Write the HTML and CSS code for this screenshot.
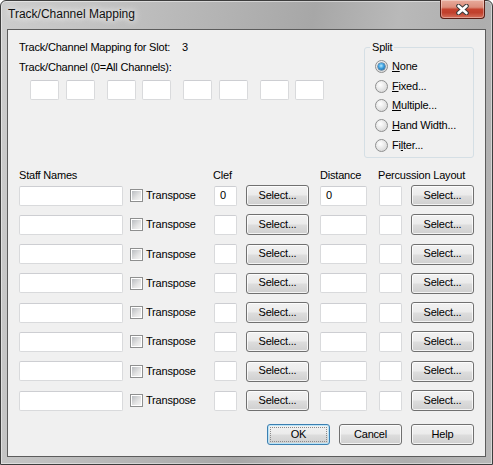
FILE: index.html
```html
<!DOCTYPE html>
<html>
<head>
<meta charset="utf-8">
<link rel="stylesheet" href="styles.css">
</head>
<body>
<div class="window">
  <div class="titlebar">
    <span class="title">Track/Channel Mapping</span>
    <div class="close">
      <svg width="13" height="11" viewBox="0 0 13 11">
        <path d="M2.5 2 L10.5 9 M10.5 2 L2.5 9" stroke="#3a3a3a" stroke-width="4.6" stroke-linecap="round"/>
        <path d="M2.5 2 L10.5 9 M10.5 2 L2.5 9" stroke="#ffffff" stroke-width="2.6" stroke-linecap="round"/>
      </svg>
    </div>
  </div>
  <div class="client">
    <div class="top">
      <div class="mapping">
        <div class="slot-line"><span class="slot-label">Track/Channel Mapping for Slot:</span><span>3</span></div>
        <div class="channel-label">Track/Channel (0=All Channels):</div>
        <div class="channels">
          <div class="pair"><div class="tb ch"></div><div class="tb ch"></div></div>
          <div class="pair"><div class="tb ch"></div><div class="tb ch"></div></div>
          <div class="pair"><div class="tb ch"></div><div class="tb ch"></div></div>
          <div class="pair"><div class="tb ch"></div><div class="tb ch"></div></div>
        </div>
      </div>
      <fieldset class="split">
        <legend>Split</legend>
        <div class="radios">
          <div class="radio-row"><span class="radio on"><span class="dot"></span></span><span><u>N</u>one</span></div>
          <div class="radio-row"><span class="radio"></span><span><u>F</u>ixed...</span></div>
          <div class="radio-row"><span class="radio"></span><span><u>M</u>ultiple...</span></div>
          <div class="radio-row"><span class="radio"></span><span><u>H</u>and Width...</span></div>
          <div class="radio-row"><span class="radio"></span><span>Fi<u>l</u>ter...</span></div>
        </div>
      </fieldset>
    </div>

    <div class="cols head">
      <div>Staff Names</div>
      <div></div>
      <div class="h-clef">Clef</div>
      <div></div>
      <div>Distance</div>
      <div class="h-perc">Percussion Layout</div>
    </div>

    <div class="cols rows">
      <div class="tb staff"></div>
      <div class="trans"><span class="cb"></span><span>Transpose</span></div>
      <div class="tb small">0</div>
      <div class="btn">Select...</div>
      <div class="tb dist">0</div>
      <div class="tb small"></div>
      <div class="btn">Select...</div>

      <div class="tb staff"></div>
      <div class="trans"><span class="cb"></span><span>Transpose</span></div>
      <div class="tb small"></div>
      <div class="btn">Select...</div>
      <div class="tb dist"></div>
      <div class="tb small"></div>
      <div class="btn">Select...</div>

      <div class="tb staff"></div>
      <div class="trans"><span class="cb"></span><span>Transpose</span></div>
      <div class="tb small"></div>
      <div class="btn">Select...</div>
      <div class="tb dist"></div>
      <div class="tb small"></div>
      <div class="btn">Select...</div>

      <div class="tb staff"></div>
      <div class="trans"><span class="cb"></span><span>Transpose</span></div>
      <div class="tb small"></div>
      <div class="btn">Select...</div>
      <div class="tb dist"></div>
      <div class="tb small"></div>
      <div class="btn">Select...</div>

      <div class="tb staff"></div>
      <div class="trans"><span class="cb"></span><span>Transpose</span></div>
      <div class="tb small"></div>
      <div class="btn">Select...</div>
      <div class="tb dist"></div>
      <div class="tb small"></div>
      <div class="btn">Select...</div>

      <div class="tb staff"></div>
      <div class="trans"><span class="cb"></span><span>Transpose</span></div>
      <div class="tb small"></div>
      <div class="btn">Select...</div>
      <div class="tb dist"></div>
      <div class="tb small"></div>
      <div class="btn">Select...</div>

      <div class="tb staff"></div>
      <div class="trans"><span class="cb"></span><span>Transpose</span></div>
      <div class="tb small"></div>
      <div class="btn">Select...</div>
      <div class="tb dist"></div>
      <div class="tb small"></div>
      <div class="btn">Select...</div>

      <div class="tb staff"></div>
      <div class="trans"><span class="cb"></span><span>Transpose</span></div>
      <div class="tb small"></div>
      <div class="btn">Select...</div>
      <div class="tb dist"></div>
      <div class="tb small"></div>
      <div class="btn">Select...</div>
    </div>

    <div class="actions">
      <div class="btn default">OK</div>
      <div class="btn">Cancel</div>
      <div class="btn">Help</div>
    </div>
  </div>
</div>
</body>
</html>
```

FILE: styles.css
```css
html, body {
  margin: 0;
  padding: 0;
  background: #ffffff;
}

.window {
  box-sizing: border-box;
  width: 493px;
  height: 465px;
  border: 1px solid #3d3d3d;
  border-radius: 6px 6px 0 0;
  background: linear-gradient(100deg, #cdcdcd 0%, #c1c1c1 20%, #b4b4b4 38%, #a7a7a7 55%, #b9b9b9 70%, #aeaeae 85%, #b8b8b8 100%);
  box-shadow: inset 0 0 0 1px rgba(255, 255, 255, 0.45);
  display: flex;
  flex-direction: column;
  font-family: "Liberation Sans", Arial, sans-serif;
  font-size: 11px;
  letter-spacing: -0.2px;
  color: #000;
}

.titlebar {
  height: 28px;
  flex: none;
  display: flex;
  justify-content: space-between;
  align-items: flex-start;
}

.title {
  font-size: 12px;
  letter-spacing: 0;
  line-height: 15px;
  padding-top: 6px;
  padding-left: 7px;
  color: #111;
  text-shadow: 0 0 6px #ffffff, 0 0 10px rgba(255, 255, 255, 0.8);
}

.close {
  box-sizing: border-box;
  width: 45px;
  height: 19px;
  margin-right: 7px;
  margin-top: -1px;
  border: 1px solid #5a1f16;
  border-top: none;
  border-radius: 0 0 4px 4px;
  background: linear-gradient(#e8ab9c 0%, #dc8e7c 40%, #c5432f 52%, #c0402c 70%, #d5705a 100%);
  box-shadow: inset 0 0 0 1px rgba(255, 255, 255, 0.35);
  display: flex;
  align-items: center;
  justify-content: center;
}

.client {
  box-sizing: border-box;
  height: 428px;
  margin: 0 6px 7px 6px;
  border: 1px solid #5c5c5c;
  background: #f0f0f0;
  padding: 0 11px;
  display: flex;
  flex-direction: column;
}

.top {
  display: flex;
  justify-content: space-between;
  align-items: flex-start;
}

.mapping {
  padding-top: 11px;
}

.slot-line,
.channel-label {
  line-height: 13px;
  white-space: nowrap;
}

.slot-label {
  display: inline-block;
  width: 163px;
}

.channel-label {
  margin-top: 7px;
}

.channels {
  display: flex;
  gap: 12px;
  margin-top: 6px;
  margin-left: 11px;
}

.pair {
  display: flex;
  gap: 6.5px;
}

.tb {
  box-sizing: border-box;
  height: 20px;
  background: #ffffff;
  border: 1px solid #d9dadc;
  border-top-color: #cdced2;
  border-radius: 2px;
  padding-left: 5px;
  display: flex;
  align-items: center;
  line-height: 13px;
}

.ch {
  width: 29px;
}

.split {
  box-sizing: border-box;
  width: 110px;
  height: 117px;
  margin: 11px 0 0 0;
  padding: 6px 0 0 5px;
  border: 1px solid #d5dfe5;
  border-radius: 3px;
}

.split legend {
  padding: 0 2px;
  line-height: 13px;
}

.radios {
  display: flex;
  flex-direction: column;
  gap: 6.7px;
  margin-left: 5px;
}

.radio-row {
  display: flex;
  align-items: center;
  gap: 4px;
  height: 13px;
  line-height: 13px;
  white-space: nowrap;
}

.radio {
  box-sizing: border-box;
  width: 13px;
  height: 13px;
  border-radius: 50%;
  border: 1px solid #8e8f8f;
  background: radial-gradient(circle at 40% 35%, #ffffff 0%, #eeeeee 35%, #cfcfcf 100%);
  display: flex;
  align-items: center;
  justify-content: center;
}

.dot {
  width: 7px;
  height: 7px;
  border-radius: 50%;
  background: radial-gradient(circle at 45% 40%, #b4ebff 0%, #3c9fdf 45%, #114f84 100%);
  box-shadow: 0 0 0 0.5px #1b4f78;
}

.cols {
  display: grid;
  grid-template-columns: 111px 84px 32px 74px 59px 32px 63px;
}

.head {
  margin-top: 11px;
  line-height: 13px;
  white-space: nowrap;
}

.h-clef {
  margin-left: -1px;
}

.h-perc {
  grid-column: span 2;
  margin-left: -1px;
}

.rows {
  margin-top: 3px;
  grid-auto-rows: 21px;
  row-gap: 8.3px;
  align-items: center;
}

.staff {
  width: 104px;
}

.small {
  width: 23px;
}

.dist {
  width: 47px;
}

.trans {
  display: flex;
  align-items: center;
  gap: 3px;
  line-height: 13px;
}

.cb {
  box-sizing: border-box;
  width: 13px;
  height: 13px;
  border: 1px solid #8e8f8f;
  padding: 1px;
  background: linear-gradient(135deg, #b9bcc0 0%, #e4e4e4 60%, #f4f4f4 100%) content-box, #f6f6f6;
  box-shadow: inset 0 0 0 1px #ffffff;
}

.btn {
  box-sizing: border-box;
  width: 63px;
  height: 21px;
  border: 1px solid #707070;
  border-radius: 3px;
  background: linear-gradient(#f2f2f2 0%, #ebebeb 48%, #dddddd 52%, #cfcfcf 100%);
  box-shadow: inset 0 0 0 1px rgba(255, 255, 255, 0.75);
  display: flex;
  align-items: center;
  justify-content: center;
  line-height: 13px;
  padding-bottom: 1px;
}

.default {
  border-color: #3c7fb1;
  box-shadow: inset 0 0 0 1px #b9e4f8;
  outline: 1px dotted #8a8a8a;
  outline-offset: -4px;
}

.actions {
  display: flex;
  justify-content: flex-end;
  gap: 9px;
  margin-top: 13px;
}
```
